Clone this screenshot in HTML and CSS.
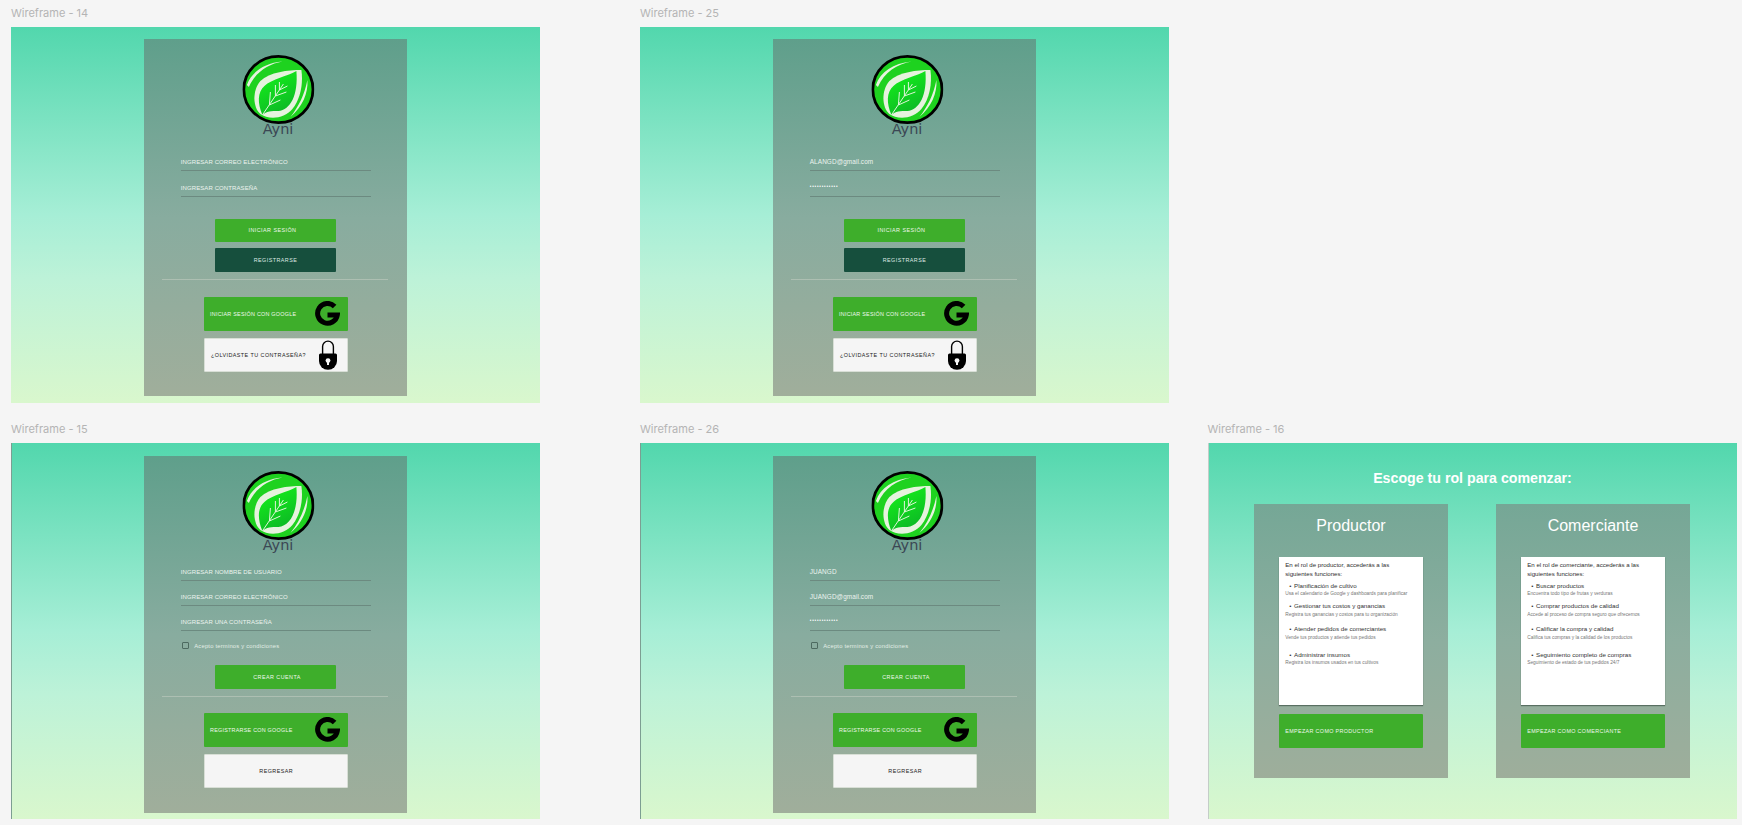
FILE: index.html
```html
<!DOCTYPE html>
<html lang="en">
<head>
    <meta charset="UTF-8">
    <meta name="viewport" content="width=device-width, initial-scale=1.0">
    <title>Ayni wireframes</title>
    <link rel="stylesheet" href="styles.css">
</head>
<body>
    <svg class="icon-defs" aria-hidden="true">
        <defs>
            <linearGradient id="leafGreen" x1="0.3" y1="0.1" x2="0.7" y2="1">
                <stop offset="0" stop-color="#14ea1c"/>
                <stop offset="1" stop-color="#0cb526"/>
            </linearGradient>
        </defs>
        <symbol id="logo" viewBox="0 0 72 69" preserveAspectRatio="none">
            <ellipse cx="36" cy="34.5" rx="34.6" ry="33.1" fill="#1ed21f" stroke="#000" stroke-width="2.8"/>
            <path d="M59 15C46 15 27 17 18 26C10 35 10 52 18 59C26 65 42 64 50 54C58 44 61 29 59 15Z" fill="#e6f3de"/>
            <path d="M54 16C46 21 29 24 22 31C15 37 15 48 20 60C24 56 29 56 36 56C48 55 56 40 54 16Z" fill="url(#leafGreen)"/>
            <path d="M4.5 30C9 17 22 8 40 6.5C26 9 13 17 6.5 32Z" fill="#e6f3de"/>
            <path d="M65 25C66 38 60 52 48 62C56 52 62 40 65 25Z" fill="#e6f3de"/>
            <path d="M20 60L41 29M27 50L28 37M27 50L38 45M33 41L33 30M33 41L44 37M37 35L37 27M37 35L45 31" fill="none" stroke="#dff5d8" stroke-width="1"/>
        </symbol>
        <symbol id="google" viewBox="0 0 25 25">
            <path d="M19.6 5.4A9.9 9.9 0 1 0 22.3 14H12.5" fill="none" stroke="#000" stroke-width="5"/>
        </symbol>
        <symbol id="lock" viewBox="0 0 18 30">
            <path d="M3.6 14V6.5a5.4 5.4 0 0 1 10.8 0V14" fill="none" stroke="#000" stroke-width="1.4"/>
            <path d="M1.5 13.5H16.5Q18 13.5 18 15V21a9 8.7 0 0 1-18 0V15Q0 13.5 1.5 13.5Z" fill="#000"/>
            <circle cx="9" cy="20.6" r="2.4" fill="#f5f5f5"/>
            <rect x="8" y="21" width="2" height="4" fill="#f5f5f5"/>
        </symbol>
    </svg>

    <div class="row row-top">
        <section class="wire">
            <div class="wire-label">Wireframe - 14</div>
            <div class="frame">
                <div class="panel">
                    <svg class="logo"><use href="#logo"/></svg>
                    <div class="brand">Ayni</div>
                    <div class="fields">
                        <div class="field">INGRESAR CORREO ELECTRÓNICO</div>
                        <div class="field">INGRESAR CONTRASEÑA</div>
                    </div>
                    <div class="btn btn-green btn-main btn-login"><span class="shift-left">INICIAR SESIÓN</span></div>
                    <div class="btn btn-dark btn-main">REGISTRARSE</div>
                    <div class="divider"></div>
                    <div class="btn btn-green btn-wide btn-google"><span>INICIAR SESIÓN CON GOOGLE</span><svg class="icon-g"><use href="#google"/></svg></div>
                    <div class="btn btn-light btn-wide btn-forgot"><span>¿OLVIDASTE TU CONTRASEÑA?</span><svg class="icon-lock"><use href="#lock"/></svg></div>
                </div>
            </div>
        </section>
        <section class="wire">
            <div class="wire-label">Wireframe - 25</div>
            <div class="frame">
                <div class="panel">
                    <svg class="logo"><use href="#logo"/></svg>
                    <div class="brand">Ayni</div>
                    <div class="fields">
                        <div class="field field-value">ALANGD@gmail.com</div>
                        <div class="field field-dots">••••••••••••</div>
                    </div>
                    <div class="btn btn-green btn-main btn-login"><span class="shift-left">INICIAR SESIÓN</span></div>
                    <div class="btn btn-dark btn-main">REGISTRARSE</div>
                    <div class="divider"></div>
                    <div class="btn btn-green btn-wide btn-google"><span>INICIAR SESIÓN CON GOOGLE</span><svg class="icon-g"><use href="#google"/></svg></div>
                    <div class="btn btn-light btn-wide btn-forgot"><span>¿OLVIDASTE TU CONTRASEÑA?</span><svg class="icon-lock"><use href="#lock"/></svg></div>
                </div>
            </div>
        </section>
    </div>

    <div class="row">
        <section class="wire">
            <div class="wire-label">Wireframe - 15</div>
            <div class="frame frame-edge">
                <div class="panel">
                    <svg class="logo"><use href="#logo"/></svg>
                    <div class="brand">Ayni</div>
                    <div class="fields fields-tight">
                        <div class="field">INGRESAR NOMBRE DE USUARIO</div>
                        <div class="field">INGRESAR CORREO ELECTRÓNICO</div>
                        <div class="field">INGRESAR UNA CONTRASEÑA</div>
                    </div>
                    <div class="terms"><span class="checkbox"></span>Acepto terminos y condiciones</div>
                    <div class="btn btn-green btn-main btn-create"><span class="shift-right">CREAR CUENTA</span></div>
                    <div class="divider"></div>
                    <div class="btn btn-green btn-wide btn-google"><span>REGISTRARSE CON GOOGLE</span><svg class="icon-g"><use href="#google"/></svg></div>
                    <div class="btn btn-light btn-wide btn-back"><span class="shift-right">REGRESAR</span></div>
                </div>
            </div>
        </section>
        <section class="wire">
            <div class="wire-label">Wireframe - 26</div>
            <div class="frame frame-edge">
                <div class="panel">
                    <svg class="logo"><use href="#logo"/></svg>
                    <div class="brand">Ayni</div>
                    <div class="fields fields-tight">
                        <div class="field field-value">JUANGD</div>
                        <div class="field field-value">JUANGD@gmail.com</div>
                        <div class="field field-dots">••••••••••••</div>
                    </div>
                    <div class="terms"><span class="checkbox"></span>Acepto terminos y condiciones</div>
                    <div class="btn btn-green btn-main btn-create"><span class="shift-right">CREAR CUENTA</span></div>
                    <div class="divider"></div>
                    <div class="btn btn-green btn-wide btn-google"><span>REGISTRARSE CON GOOGLE</span><svg class="icon-g"><use href="#google"/></svg></div>
                    <div class="btn btn-light btn-wide btn-back"><span class="shift-right">REGRESAR</span></div>
                </div>
            </div>
        </section>
        <section class="wire wire-roles">
            <div class="wire-label">Wireframe - 16</div>
            <div class="frame frame-roles">
                <h2 class="roles-title">Escoge tu rol para comenzar:</h2>
                <div class="roles">
                    <div class="role">
                        <h3>Productor</h3>
                        <div class="role-card">
                            <p class="intro">En el rol de productor, accederás a las siguientes funciones:</p>
                            <div class="item"><div class="item-title">Planificación de cultivo</div><div class="item-sub">Usa el calendario de Google y dashboards para planificar</div></div>
                            <div class="item"><div class="item-title">Gestionar tus costos y ganancias</div><div class="item-sub">Registra tus ganancias y costos para tu organización</div></div>
                            <div class="item item-md"><div class="item-title">Atender pedidos de comerciantes</div><div class="item-sub">Vende tus productos y atiende tus pedidos</div></div>
                            <div class="item item-lg"><div class="item-title">Administrar insumos</div><div class="item-sub">Registra los insumos usados en tus cultivos</div></div>
                        </div>
                        <div class="btn btn-green role-btn">EMPEZAR COMO PRODUCTOR</div>
                    </div>
                    <div class="role">
                        <h3>Comerciante</h3>
                        <div class="role-card">
                            <p class="intro">En el rol de comerciante, accederás a las siguientes funciones:</p>
                            <div class="item"><div class="item-title">Buscar productos</div><div class="item-sub">Encuentra todo tipo de frutas y verduras</div></div>
                            <div class="item"><div class="item-title">Comprar productos de calidad</div><div class="item-sub">Accede al proceso de compra seguro que ofrecemos</div></div>
                            <div class="item item-md"><div class="item-title">Calificar la compra y calidad</div><div class="item-sub">Califica tus compras y la calidad de los productos</div></div>
                            <div class="item item-lg"><div class="item-title">Seguimiento completo de compras</div><div class="item-sub">Seguimiento de estado de tus pedidos 24/7</div></div>
                        </div>
                        <div class="btn btn-green role-btn">EMPEZAR COMO COMERCIANTE</div>
                    </div>
                </div>
            </div>
        </section>
    </div>
</body>
</html>
```

FILE: styles.css
```css
* {
    box-sizing: border-box;
}
html, body {
    height: 100%;
}
body {
    margin: 0;
    padding: 5.5px 0 0 11px;
    overflow: hidden;
    background: #f5f5f5;
    font-family: "Liberation Sans", Arial, sans-serif;
    color: #fff;
}
.icon-defs {
    display: block;
    width: 0;
    height: 0;
}
.row {
    display: flex;
    gap: 100px;
}
.row-top {
    margin-bottom: 19.5px;
}
.wire-roles {
    margin-left: -61.5px;
}
.wire-label {
    height: 14px;
    margin-bottom: 7px;
    font-family: Inter, sans-serif;
    font-size: 11px;
    line-height: 14px;
    color: #b4b4b4;
}
.frame {
    width: 529px;
    height: 376px;
    padding-top: 12.5px;
    background: linear-gradient(180deg, #52d7ad 0%, #a6eed6 50%, #bdf2d8 67%, #d9f7cd 100%);
}
.frame-edge {
    border-left: 1px solid #7c9e92;
}
.panel {
    width: 263.5px;
    height: 357px;
    margin: 0 auto;
    padding-top: 15.5px;
    background: linear-gradient(180deg, #5f9f8b 0%, #88ac9f 50%, #a0ae9b 100%);
}
.frame-edge .panel {
    position: relative;
    left: -0.5px;
}
.logo {
    display: block;
    width: 72px;
    height: 69px;
    margin: 0 auto;
    transform: translateX(2.4px);
}
.brand {
    height: 12px;
    margin-top: -1px;
    margin-bottom: 1px;
    padding-left: 5px;
    font-family: "DejaVu Sans", sans-serif;
    font-size: 14.5px;
    line-height: 12px;
    text-align: center;
    color: #3b4754;
}
.fields {
    margin: 20px 36px 0 37px;
}
.fields-tight {
    margin-top: 14px;
}
.field {
    height: 16px;
    border-bottom: 1px solid #6c8a80;
    font-size: 6px;
    line-height: 14.5px;
    letter-spacing: 0.1px;
    color: #edf4ef;
}
.field + .field {
    margin-top: 10px;
}
.fields-tight .field + .field {
    margin-top: 9px;
}
.field-value {
    font-size: 6.4px;
}
.field-dots {
    font-size: 4.5px;
    line-height: 12px;
    letter-spacing: 0.8px;
    color: #fff;
}
.btn {
    display: flex;
    align-items: center;
    font-size: 5.4px;
    letter-spacing: 0.45px;
    white-space: nowrap;
    border-radius: 1px;
}
.btn-green {
    background: #3eae2b;
    color: #eef8ec;
}
.btn-dark {
    background: #164f3d;
    color: #dfe9e4;
}
.btn-light {
    background: #f5f5f5;
    border: 1px solid #d8dfd6;
    color: #222;
}
.btn-main {
    justify-content: center;
    width: 120.5px;
    height: 23.5px;
    margin: 6px auto 0;
}
.btn-login {
    margin-top: 22px;
}
.btn-create {
    margin-top: 16px;
}
.shift-left {
    margin-right: 6px;
}
.shift-right {
    margin-left: 3px;
}
.divider {
    height: 1px;
    margin: 7px 19px 17px 18px;
    background: #adbfb2;
}
.btn-create + .divider {
    margin-bottom: 16px;
}
.btn-wide {
    justify-content: space-between;
    width: 144px;
    height: 34px;
    margin: 0 auto;
    padding: 0 8px 0 6.5px;
}
.btn-google {
    letter-spacing: 0.25px;
}
.btn-forgot {
    margin-top: 7px;
    padding-right: 10px;
}
.btn-back {
    justify-content: center;
    margin-top: 7px;
}
.icon-g {
    width: 25px;
    height: 25px;
}
.icon-lock {
    width: 18px;
    height: 30px;
    margin-top: 1px;
}
.terms {
    display: flex;
    align-items: center;
    height: 7px;
    margin: 11px 0 0 38.5px;
    font-size: 5.8px;
    letter-spacing: 0.22px;
    color: #e3eee6;
}
.checkbox {
    width: 7px;
    height: 7px;
    margin-right: 5px;
    border: 1px solid #4d6a60;
    border-radius: 1px;
}
.frame-roles {
    padding-top: 26px;
    border-left: 1px solid #c4cdc8;
}
.roles-title {
    height: 18px;
    margin: 0 0 17px;
    font-size: 14.2px;
    font-weight: 700;
    line-height: 18px;
    text-align: center;
}
.roles {
    display: flex;
    justify-content: center;
    gap: 48.5px;
    margin-left: -1px;
}
.role {
    width: 193.5px;
    height: 274px;
    padding: 12px 25px 0;
    background: linear-gradient(180deg, #75a796 0%, #8dae9f 50%, #9eae9b 100%);
}
.role h3 {
    height: 19px;
    margin: 0;
    font-size: 16px;
    font-weight: 400;
    line-height: 19px;
    text-align: center;
}
.role-card {
    height: 148.5px;
    margin-top: 21.5px;
    padding: 4.7px 6px 0;
    background: #fff;
    box-shadow: 0 1px 1px rgba(40, 60, 50, 0.55);
    color: #2e2e2e;
}
.intro {
    max-width: 118px;
    margin: 0;
    font-size: 6.1px;
    line-height: 8.6px;
}
.item {
    margin-top: 3.2px;
}
.item-md {
    margin-top: 5.6px;
}
.item-lg {
    margin-top: 8.2px;
}
.item-title {
    padding-left: 8.6px;
    font-size: 6.2px;
    line-height: 8.7px;
    color: #333;
}
.item-title::before {
    content: "•";
    margin: 0 2.5px 0 -4.5px;
}
.item-sub {
    font-size: 4.8px;
    line-height: 8.7px;
    color: #777;
}
.role-btn {
    height: 34px;
    margin-top: 8.7px;
    padding-left: 6px;
    letter-spacing: 0.35px;
}
```
